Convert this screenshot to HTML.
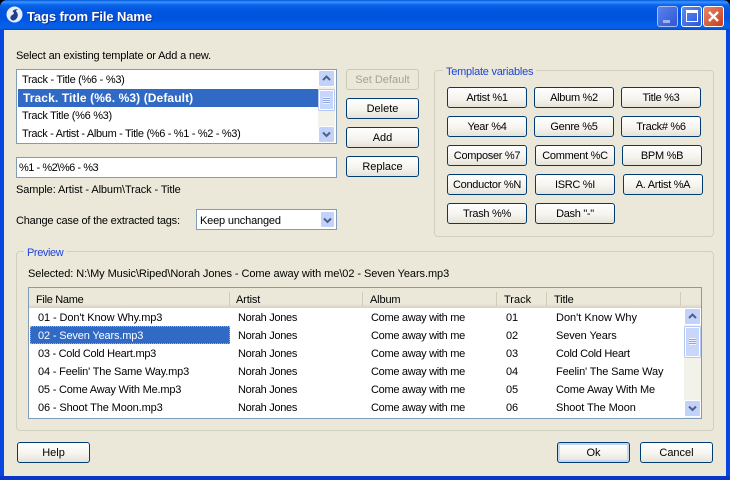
<!DOCTYPE html>
<html><head><meta charset="utf-8"><style>
html,body{margin:0;padding:0;width:730px;height:480px;overflow:hidden;background:#000}
*{box-sizing:border-box}
#w{position:absolute;left:0;top:0;width:730px;height:480px;overflow:hidden;background:#0a4be0;border-radius:7px 7px 0 0;font:11px "Liberation Sans",sans-serif;color:#000}
#tb{position:absolute;left:0;top:0;width:730px;height:30px;border-radius:7px 7px 0 0;background:linear-gradient(180deg,#0458d8 0,#3a93ff 2px,#0a64ea 5px,#0256e0 10px,#0053de 18px,#0460ea 25px,#0a5fe6 28px,#0048c8 30px)}
#tt{position:absolute;left:27px;top:9px;color:#fff;font:bold 13px "Liberation Sans",sans-serif;letter-spacing:-.1px;text-shadow:1px 1px 0 #0f2f90;white-space:nowrap}
#c{position:absolute;left:4px;top:30px;width:722px;height:446px;background:#ebe8d9}
#lb{position:absolute;left:0;top:30px;width:4px;height:450px;background:#0846e0}
#rb{position:absolute;left:726px;top:30px;width:4px;height:450px;background:#0846e0}
#bb{position:absolute;left:0;top:476px;width:730px;height:4px;background:#0836c8}
.a{position:absolute;white-space:nowrap}
.t{position:absolute;white-space:nowrap;line-height:14px;letter-spacing:-.15px;margin-top:1px}
.n{letter-spacing:-.3px}
.b{position:absolute;height:21px;border:1px solid #003c74;border-radius:3px;background:linear-gradient(180deg,#fff 0,#f5f4ee 55%,#e6e3d8 100%);text-align:center;line-height:21px;white-space:nowrap;color:#000;letter-spacing:-.3px}
.gb{position:absolute;border:1px solid #d0d0bf;border-radius:4px}
.lg{position:absolute;background:#ebe8d9;color:#1c44e0;padding:0 3px;line-height:14px;white-space:nowrap;letter-spacing:-.25px;margin-top:1px}
.box{position:absolute;background:#fff;border:1px solid #7f9db9}
.sel{position:absolute;background:#316ac5}
.sb{position:absolute;width:17px;background:#f3f2ea}
.sbb{position:absolute;left:0;width:17px;height:17px;border:1px solid #fff;border-radius:2px;background:#c3d2fb}
.sbt{position:absolute;left:0;width:17px;border:1px solid #b5c8f5;outline:1px solid #fff;outline-offset:-2px;border-radius:2px;background:#c8d6fc}
.h{position:absolute;top:0;width:1px;height:14px;background:#d0ccb8}
.wb{position:absolute;top:6px;width:21px;height:21px;border:1px solid #fff;border-radius:3px}
</style></head><body><div id="w">
<div id="tb"></div>
<svg class="a" style="left:6px;top:6px" width="17" height="17" viewBox="0 0 17 17"><circle cx="8.5" cy="8.5" r="8" fill="#e8eef8"/><path d="M5 13.500C3.500 11 5 9.500 7 8.500 8.500 7.500 8 6 6.500 5.500 8 3 11 3 12 3.500 10 4 9.500 5 11 6.500 12.500 8.500 12 12 9 14 7.500 14.800 6 14.500 5 13.500z" fill="#1d3f8c"/></svg>
<div id="tt">Tags from File Name</div>
<div class="wb" style="left:657px;border-color:#a9bdf2;background:linear-gradient(135deg,#5a83ee,#2f55d2)"><div class="a" style="left:5px;top:13px;width:7px;height:3px;background:#9db4f2"></div></div>
<div class="wb" style="left:681px;background:linear-gradient(135deg,#5f8bf0,#2a58d8)"><div class="a" style="left:4px;top:3px;width:12px;height:12px;border:1px solid #fff;border-top:3px solid #fff"></div></div>
<div class="wb" style="left:703px;background:linear-gradient(135deg,#e8876a,#c73c1a)"><svg class="a" style="left:3px;top:3px" width="13" height="13" viewBox="0 0 13 13"><path d="M2 2l9 9M11 2l-9 9" stroke="#fff" stroke-width="2.4" fill="none"/></svg></div>
<div id="c"></div><div id="lb"></div><div id="rb"></div><div id="bb"></div>

<div class="t" style="left:16px;top:48px">Select an existing template or Add a new.</div>
<div class="box" style="left:16px;top:69px;width:321px;height:75px"></div>
<div class="sel" style="left:18px;top:89px;width:300px;height:18px"></div>
<div class="t" style="left:22px;top:72px;letter-spacing:-.28px">Track - Title (%6 - %3)</div>
<div class="t" style="left:23px;top:90px;color:#fff;font-weight:bold;font-size:12px;letter-spacing:.1px">Track. Title (%6. %3) (Default)</div>
<div class="t" style="left:22px;top:108px;letter-spacing:-.3px">Track Title (%6 %3)</div>
<div class="t" style="left:22px;top:126px;letter-spacing:-.33px">Track - Artist - Album - Title (%6 - %1 - %2 - %3)</div>
<div class="sb" style="left:318px;top:70px;height:73px">
<div class="sbb" style="top:0"><svg class="a" style="left:3px;top:4px" width="9" height="7"><path d="M1 5l3.500-3.500L8 5" stroke="#4d6185" stroke-width="2" fill="none"/></svg></div>
<div class="sbt" style="top:19px;height:22px"><div class="a" style="left:4px;top:7px;width:7px;height:7px;background:repeating-linear-gradient(180deg,#eef3ff 0 1px,#8ea6e0 1px 2px)"></div></div>
<div class="sbb" style="top:56px"><svg class="a" style="left:3px;top:4px" width="9" height="7"><path d="M1 1.500L4.500 5 8 1.500" stroke="#4d6185" stroke-width="2" fill="none"/></svg></div>
</div>
<div class="b" style="left:346px;top:69px;width:73px;border-color:#cac8bb;background:#ebe8d9;color:#a5a294;letter-spacing:0">Set Default</div>
<div class="b" style="left:346px;top:98px;width:73px;letter-spacing:0">Delete</div>
<div class="b" style="left:346px;top:127px;width:73px;letter-spacing:0">Add</div>
<div class="b" style="left:346px;top:156px;width:73px;letter-spacing:0">Replace</div>

<div class="box" style="left:16px;top:157px;width:321px;height:21px"></div>
<div class="t" style="left:19px;top:160px;letter-spacing:-.47px">%1 - %2\%6 - %3</div>
<div class="t" style="left:16px;top:182px;letter-spacing:-.1px">Sample: Artist - Album\Track - Title</div>
<div class="t" style="left:16px;top:213px;letter-spacing:-.2px">Change case of the extracted tags:</div>
<div class="box" style="left:196px;top:209px;width:141px;height:21px"></div>
<div class="t" style="left:200px;top:213px;letter-spacing:-.17px">Keep unchanged</div>
<div class="sbb" style="left:320px;top:211px;width:15px;height:17px"><svg class="a" style="left:2px;top:5px" width="9" height="7"><path d="M1 1.500L4.500 5 8 1.500" stroke="#4d6185" stroke-width="2" fill="none"/></svg></div>

<div class="gb" style="left:434px;top:70px;width:280px;height:167px"></div>
<div class="lg" style="left:443px;top:64px">Template variables</div>
<div class="b" style="left:447px;top:87px;width:80px">Artist %1</div>
<div class="b" style="left:534px;top:87px;width:80px">Album %2</div>
<div class="b" style="left:621px;top:87px;width:80px">Title %3</div>
<div class="b" style="left:447px;top:116px;width:80px">Year %4</div>
<div class="b" style="left:534px;top:116px;width:80px">Genre %5</div>
<div class="b" style="left:621px;top:116px;width:80px">Track# %6</div>
<div class="b" style="left:447px;top:145px;width:80px">Composer %7</div>
<div class="b" style="left:535px;top:145px;width:80px">Comment %C</div>
<div class="b" style="left:622px;top:145px;width:80px">BPM %B</div>
<div class="b" style="left:447px;top:174px;width:80px">Conductor %N</div>
<div class="b" style="left:535px;top:174px;width:80px">ISRC %I</div>
<div class="b" style="left:623px;top:174px;width:80px">A. Artist %A</div>
<div class="b" style="left:447px;top:203px;width:80px">Trash %%</div>
<div class="b" style="left:535px;top:203px;width:80px">Dash "-"</div>

<div class="gb" style="left:16px;top:251px;width:698px;height:180px"></div>
<div class="lg" style="left:24px;top:245px;letter-spacing:-.4px">Preview</div>
<div class="t" style="left:28px;top:266px;letter-spacing:-.07px">Selected: N:\My Music\Riped\Norah Jones - Come away with me\02 - Seven Years.mp3</div>
<div class="box" style="left:28px;top:287px;width:674px;height:132px"></div>
<div class="a" style="left:29px;top:288px;width:672px;height:20px;background:linear-gradient(180deg,#ebe8d9 0,#ebe8d9 80%,#d6d2c2 100%)"></div>
<div class="h" style="left:229px;top:292px"></div><div class="h" style="left:362px;top:292px"></div><div class="h" style="left:496px;top:292px"></div><div class="h" style="left:546px;top:292px"></div><div class="h" style="left:680px;top:292px"></div>
<div class="t n" style="left:36px;top:292px">File Name</div><div class="t" style="left:236px;top:292px">Artist</div><div class="t" style="left:370px;top:292px">Album</div><div class="t" style="left:504px;top:292px;letter-spacing:0">Track</div><div class="t" style="left:554px;top:292px">Title</div>

<div class="sel" style="left:30px;top:326px;width:200px;height:18px;outline:1px dotted #e8a040;outline-offset:-1px"></div>
<div class="t" style="left:38px;top:310px;letter-spacing:-.1px">01 - Don't Know Why.mp3</div><div class="t n" style="left:238px;top:310px">Norah Jones</div><div class="t n" style="left:371px;top:310px">Come away with me</div><div class="t" style="left:506px;top:310px">01</div><div class="t" style="left:556px;top:310px;letter-spacing:0">Don't Know Why</div>
<div class="t" style="left:38px;top:328px;color:#fff">02 - Seven Years.mp3</div><div class="t n" style="left:238px;top:328px">Norah Jones</div><div class="t n" style="left:371px;top:328px">Come away with me</div><div class="t" style="left:506px;top:328px">02</div><div class="t" style="left:556px;top:328px;letter-spacing:-.1px">Seven Years</div>
<div class="t" style="left:38px;top:346px;letter-spacing:-.28px">03 - Cold Cold Heart.mp3</div><div class="t n" style="left:238px;top:346px">Norah Jones</div><div class="t n" style="left:371px;top:346px">Come away with me</div><div class="t" style="left:506px;top:346px">03</div><div class="t n" style="left:556px;top:346px">Cold Cold Heart</div>
<div class="t" style="left:38px;top:364px;letter-spacing:-.17px">04 - Feelin' The Same Way.mp3</div><div class="t n" style="left:238px;top:364px">Norah Jones</div><div class="t n" style="left:371px;top:364px">Come away with me</div><div class="t" style="left:506px;top:364px">04</div><div class="t" style="left:556px;top:364px">Feelin' The Same Way</div>
<div class="t" style="left:38px;top:382px;letter-spacing:-.2px">05 - Come Away With Me.mp3</div><div class="t n" style="left:238px;top:382px">Norah Jones</div><div class="t n" style="left:371px;top:382px">Come away with me</div><div class="t" style="left:506px;top:382px">05</div><div class="t" style="left:556px;top:382px;letter-spacing:-.17px">Come Away With Me</div>
<div class="t" style="left:38px;top:400px;letter-spacing:-.13px">06 - Shoot The Moon.mp3</div><div class="t n" style="left:238px;top:400px">Norah Jones</div><div class="t n" style="left:371px;top:400px">Come away with me</div><div class="t" style="left:506px;top:400px">06</div><div class="t" style="left:556px;top:400px;letter-spacing:-.1px">Shoot The Moon</div>
<div class="sb" style="left:684px;top:308px;height:110px">
<div class="sbb" style="top:0"><svg class="a" style="left:3px;top:4px" width="9" height="7"><path d="M1 5l3.500-3.500L8 5" stroke="#4d6185" stroke-width="2" fill="none"/></svg></div>
<div class="sbt" style="top:18px;height:32px"><div class="a" style="left:4px;top:11px;width:7px;height:7px;background:repeating-linear-gradient(180deg,#eef3ff 0 1px,#8ea6e0 1px 2px)"></div></div>
<div class="sbb" style="top:92px"><svg class="a" style="left:3px;top:4px" width="9" height="7"><path d="M1 1.500L4.500 5 8 1.500" stroke="#4d6185" stroke-width="2" fill="none"/></svg></div>
</div>

<div class="b" style="left:17px;top:442px;width:73px;letter-spacing:0">Help</div>
<div class="b" style="left:557px;top:442px;width:73px;box-shadow:inset 0 0 0 2px #c4d6f2;letter-spacing:0">Ok</div>
<div class="b" style="left:640px;top:442px;width:73px;letter-spacing:0">Cancel</div>
</div></body></html>
